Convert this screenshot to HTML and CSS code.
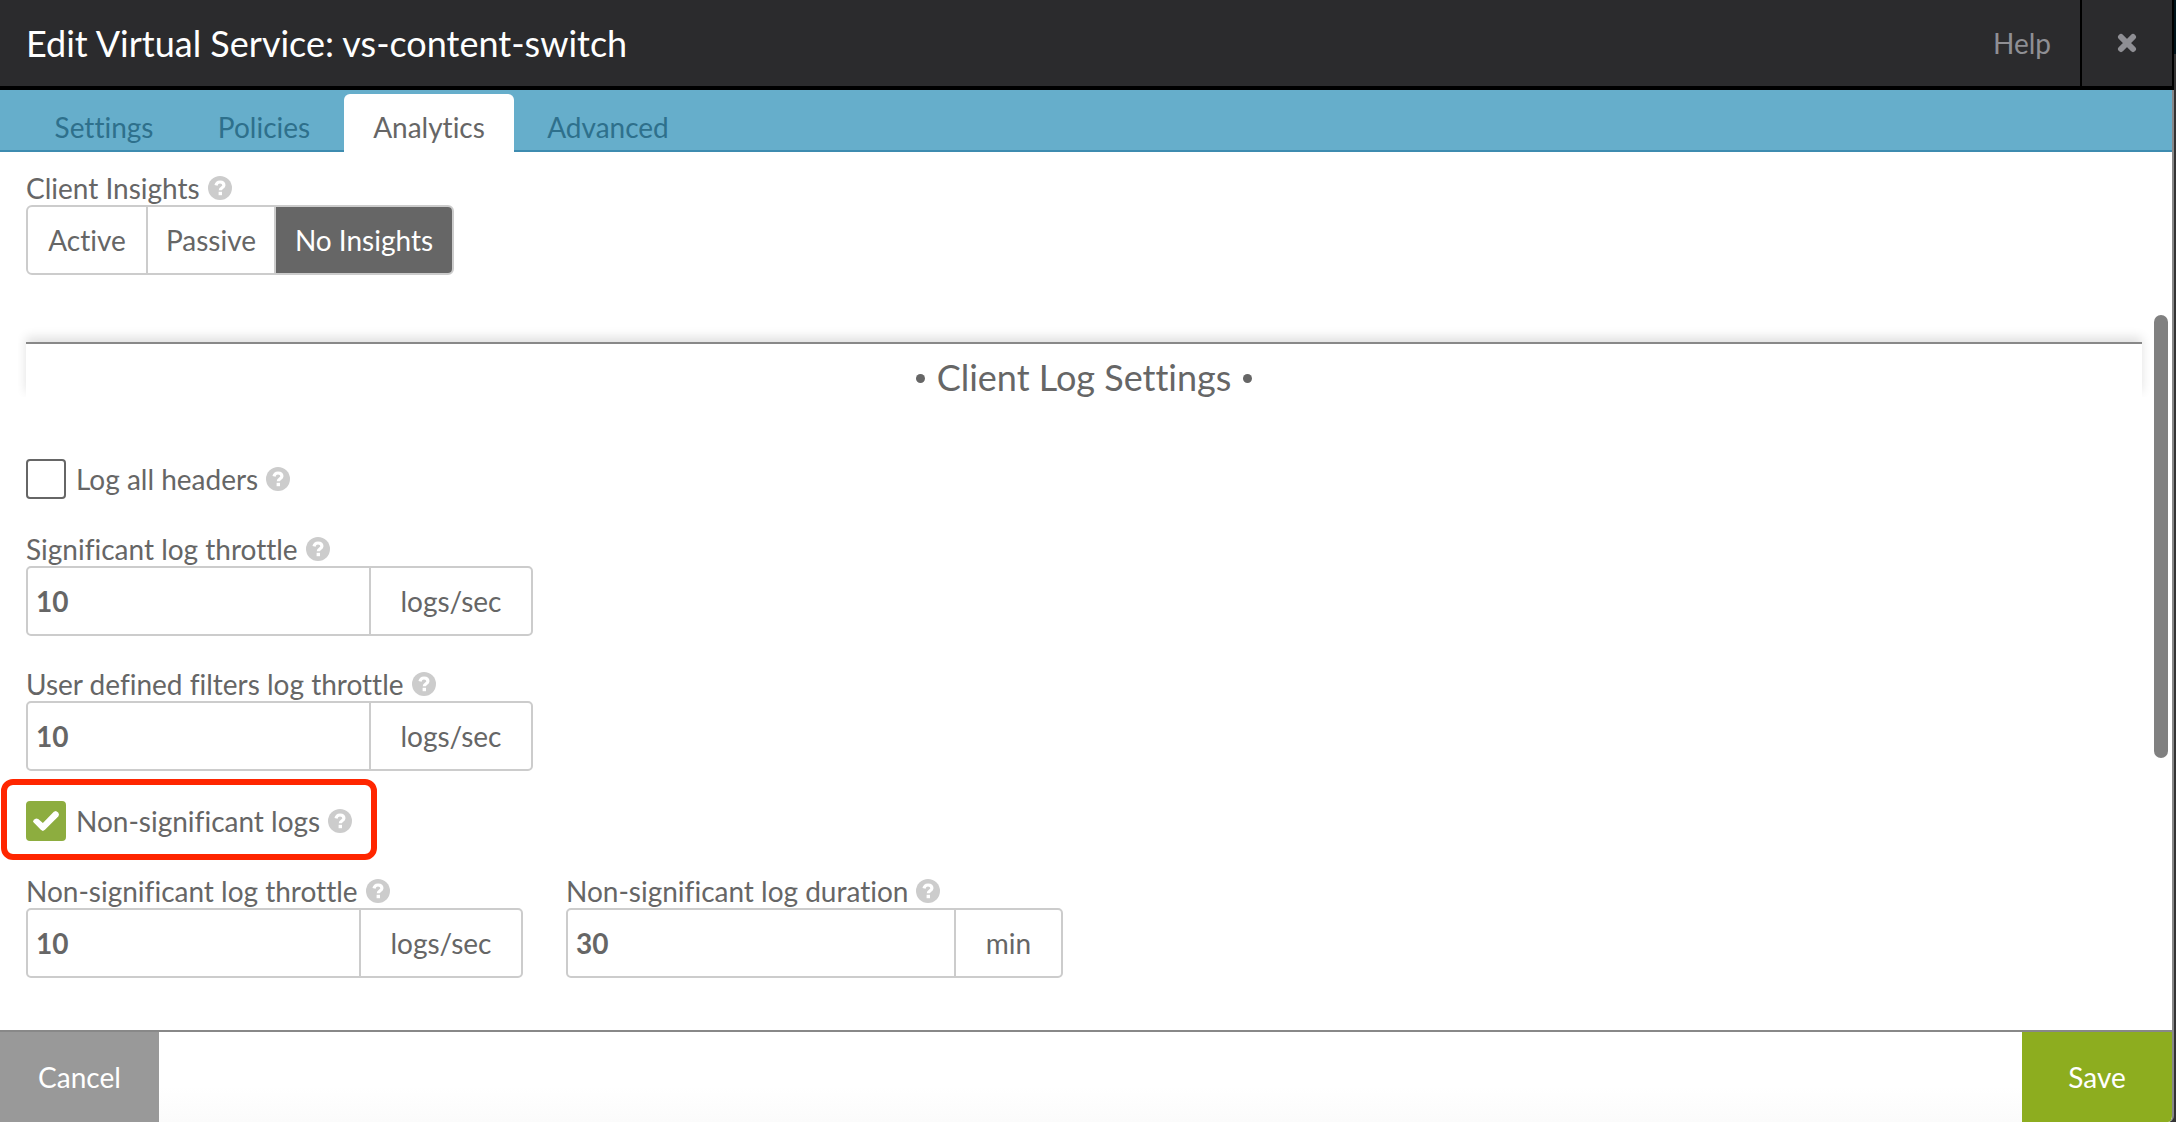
FILE: index.html
```html
<!DOCTYPE html>
<html lang="en">
<head>
<meta charset="utf-8">
<title>Edit Virtual Service: vs-content-switch</title>
<link rel="stylesheet" href="styles.css">
</head>
<body>
<svg class="defs" aria-hidden="true">
  <symbol id="help" viewBox="0 0 24 24">
    <circle cx="12" cy="12" r="12" fill="#ccc"/>
    <path d="M8 9.4C8.4 7.2 9.8 6 12 6c2.4 0 3.9 1.3 3.9 3.2 0 2.5-3.6 2.5-3.6 5" fill="none" stroke="#fff" stroke-width="3.2"/>
    <rect x="10.6" y="15.8" width="3.4" height="3.4" fill="#fff"/>
  </symbol>
</svg>
<div class="modal">
  <header class="header">
    <h1 class="title">Edit Virtual Service: vs-content-switch</h1>
    <button class="help-link" type="button">Help</button>
    <button class="close" type="button" aria-label="Close">
      <svg width="20" height="20" viewBox="0 0 20 20"><path d="M4 4L16 16M16 4L4 16" stroke="#8f8f94" stroke-width="6" stroke-linecap="round"/></svg>
    </button>
  </header>
  <div class="window">
    <nav class="tabs" role="tablist">
      <button class="tab" type="button" role="tab">Settings</button>
      <button class="tab" type="button" role="tab">Policies</button>
      <button class="tab active" type="button" role="tab" aria-selected="true">Analytics</button>
      <button class="tab wide" type="button" role="tab">Advanced</button>
    </nav>
    <main class="content">
      <div class="label" id="insights">Client Insights <svg class="help-icon"><use href="#help"/></svg></div>
      <div class="segments" role="group" aria-labelledby="insights">
        <button class="segment" type="button">Active</button>
        <button class="segment" type="button">Passive</button>
        <button class="segment selected" type="button" aria-pressed="true">No Insights</button>
      </div>
      <h2 class="section"><span class="dot"></span>Client Log Settings<span class="dot"></span></h2>
      <div class="fields">
        <div class="check-row">
          <input class="check" type="checkbox" id="headers">
          <label for="headers">Log all headers</label>
          <svg class="help-icon"><use href="#help"/></svg>
        </div>
        <div class="field">
          <label class="label" for="sig">Significant log throttle <svg class="help-icon"><use href="#help"/></svg></label>
          <div class="input-group"><input class="input" id="sig" type="text" value="10"><span class="unit">logs/sec</span></div>
        </div>
        <div class="field">
          <label class="label" for="udf">User defined filters log throttle <svg class="help-icon"><use href="#help"/></svg></label>
          <div class="input-group"><input class="input" id="udf" type="text" value="10"><span class="unit">logs/sec</span></div>
        </div>
        <div class="check-row highlighted">
          <input class="check" type="checkbox" id="nonsig" checked>
          <label for="nonsig">Non-significant logs</label>
          <svg class="help-icon"><use href="#help"/></svg>
        </div>
        <div class="pair">
          <div class="field half">
            <label class="label" for="nst">Non-significant log throttle <svg class="help-icon"><use href="#help"/></svg></label>
            <div class="input-group"><input class="input" id="nst" type="text" value="10"><span class="unit">logs/sec</span></div>
          </div>
          <div class="field half">
            <label class="label" for="nsd">Non-significant log duration <svg class="help-icon"><use href="#help"/></svg></label>
            <div class="input-group"><input class="input" id="nsd" type="text" value="30"><span class="unit short">min</span></div>
          </div>
        </div>
      </div>
      <div class="scroll-thumb"></div>
    </main>
    <footer class="footer">
      <button class="cancel" type="button">Cancel</button>
      <button class="save" type="button">Save</button>
    </footer>
  </div>
</div>
</body>
</html>
```
FILE: styles.css
```css
* { box-sizing: border-box; }

body {
  margin: 0;
  padding-right: 2px;
  background: linear-gradient(#01131a 54px, #333 54px);
  color: #666;
  font: 28px/36px Lato, "Liberation Sans", sans-serif;
  font-variant-ligatures: none;
}

button, input { font: inherit; color: inherit; }
button { margin: 0; padding: 0; border: 0; background: none; }
.defs { position: absolute; width: 0; height: 0; }

.modal { display: flex; flex-direction: column; min-height: 100vh; }

.header {
  display: flex;
  height: 90px;
  padding-left: 26px;
  background: #2b2b2d;
  border-right: 2px solid #000;
  border-bottom: 4px solid #000;
}
.title { flex: 1; margin: 0; color: #fff; font-size: 36px; font-weight: 400; line-height: 86px; }
.help-link { padding-right: 29px; color: #8f8f94; }
.close { display: grid; place-items: center; width: 92px; border-left: 2px solid #000; }

.window {
  display: flex;
  flex: 1;
  flex-direction: column;
  background: #fff;
  border-right: 2px solid #888;
  border-bottom-right-radius: 6px;
  overflow: hidden;
}

.tabs {
  display: flex;
  height: 62px;
  padding: 4px 0 0 24px;
  background: linear-gradient(#66aecb 60px, #3e8cb0 60px);
}
.tab { width: 160px; padding-top: 8px; color: #2e708c; }
.tab.active { width: 170px; color: #666; background: #fff; border-radius: 6px 6px 0 0; }
.tab.wide { width: 188px; }

.content { position: relative; flex: 1; padding: 17px 30px 50px 26px; }
.label { display: flex; align-items: center; gap: 8px; padding-top: 2px; line-height: 34px; }
.help-icon { flex: none; width: 24px; height: 24px; }

.segments {
  display: flex;
  width: fit-content;
  height: 70px;
  border: 2px solid #ccc;
  border-radius: 6px;
  overflow: hidden;
}
.segment { width: 128px; border-right: 2px solid #ccc; }
.segment:first-child { width: 120px; }
.segment.selected { width: 176px; border: 0; color: #fff; background: #666; }

.section {
  display: flex;
  align-items: center;
  justify-content: center;
  gap: 12px;
  height: 55px;
  margin: 67px 0 61px;
  padding-top: 12px;
  border-top: 2px solid #888;
  background: #fff;
  box-shadow: 0 -5px 10px rgba(0, 0, 0, .12);
  clip-path: inset(-16px -8px 0 -8px);
  font-size: 36px;
  font-weight: 400;
}
.dot { width: 9px; height: 9px; margin-top: 4px; border-radius: 50%; background: #666; }

.fields { display: grid; gap: 29px; }
.check-row {
  position: relative;
  display: flex;
  align-items: center;
  gap: 8px;
  width: fit-content;
  margin: 1px 0 2px;
}
.check {
  appearance: none;
  width: 40px;
  height: 40px;
  margin: 0 2px 0 0;
  border: 2px solid #666;
  border-radius: 4px;
  background: #fff;
}
.check:checked {
  display: grid;
  place-items: center;
  border-color: #8dad3f;
  background: #8dad3f;
}
.check:checked::before {
  content: "";
  width: 26px;
  height: 20px;
  background: #fff;
  clip-path: polygon(0 54%, 3% 44%, 12% 38%, 20% 40%, 38% 60%, 80% 4%, 88% 0, 97% 8%, 100% 18%, 98% 26%, 46% 94%, 38% 100%, 30% 94%);
}
.highlighted::after {
  content: "";
  position: absolute;
  inset: -22px -25px -19px -25px;
  border: 6px solid #ff2600;
  border-radius: 12px;
  pointer-events: none;
}

.field { width: 507px; }
.field.half { width: 497px; }
.pair { display: flex; gap: 43px; }
.input-group {
  display: flex;
  height: 70px;
  border: 2px solid #ccc;
  border-radius: 5px;
}
.input {
  flex: 1;
  min-width: 0;
  padding: 0 8px;
  border: 0;
  outline: 0;
  background: none;
  font-weight: 700;
}
.unit { width: 162px; border-left: 2px solid #ccc; line-height: 66px; text-align: center; }
.unit.short { width: 107px; }

.scroll-thumb {
  position: absolute;
  top: 163px;
  right: 4px;
  width: 14px;
  height: 443px;
  border-radius: 7px;
  background: #808080;
}

.footer {
  display: flex;
  justify-content: space-between;
  height: 92px;
  border-top: 2px solid #888;
  background: linear-gradient(#fff 60%, #fbfbfb);
  color: #fff;
}
.cancel { width: 159px; background: #999; }
.save { width: 150px; background: #8dad1f; }
```
